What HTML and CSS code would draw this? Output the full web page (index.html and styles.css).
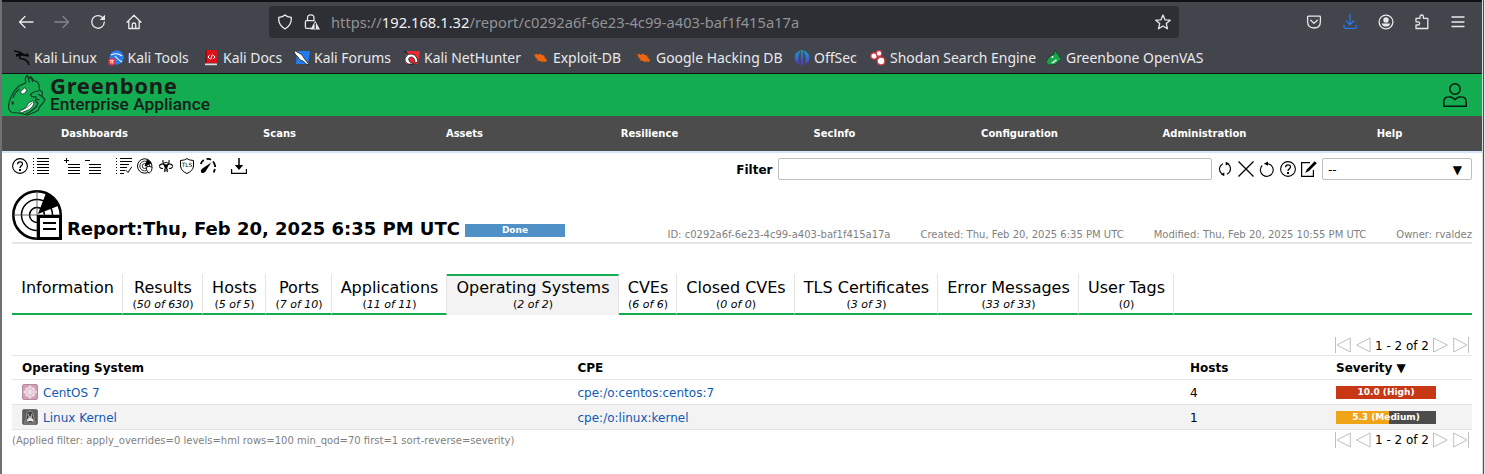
FILE: index.html
```html
<!DOCTYPE html>
<html lang="en">
<head>
<meta charset="utf-8">
<title>Greenbone Enterprise Appliance</title>
<link rel="stylesheet" href="styles.css">
</head>
<body>
<svg class="sprite" aria-hidden="true">
  <symbol id="help" viewBox="0 0 16 16"><circle cx="8" cy="8" r="7.4" fill="none" stroke="currentColor" stroke-width="1.1"/><path d="M5.6 6.3C5.6 3 10.5 3 10.5 6C10.5 7.7 8 7.8 8 10" fill="none" stroke="currentColor" stroke-width="1.3"/><rect x="7.5" y="11.5" width="1" height="1"/></symbol>
  <symbol id="first" viewBox="0 0 16 16"><path d="M.5 0V16M15.3 1V15L2 8Z" fill="none" stroke="currentColor"/></symbol>
  <symbol id="prev" viewBox="0 0 16 16"><path d="M15.1 1V15L1.7 8Z" fill="none" stroke="currentColor"/></symbol>
  <symbol id="next" viewBox="0 0 16 16"><path d="M.5 1V15L14.3 8Z" fill="none" stroke="currentColor"/></symbol>
  <symbol id="last" viewBox="0 0 16 16"><path d="M15.5 0V16M.7 1V15L14 8Z" fill="none" stroke="currentColor"/></symbol>
  <symbol id="bug" viewBox="0 0 16 16"><path d="M1.5 5L3 3.5 5 5 6.5 3.5 9 5 11 5.5 12 8 14 10 13 12 10.5 11.5 8.5 12 6.5 10.8 4 10.5 4.5 9 2.5 7.5Z" fill="#ed6413"/><path d="M0 4.5H3M11 6.3L13.5 6M3 11L5 10.3M10 13L9 11" stroke="#a44b1a" stroke-width=".7"/></symbol>
</svg>
<div class="window">
  <header class="browser">
    <div class="navbar">
      <div class="nav-buttons">
        <svg class="i16" viewBox="0 0 16 16"><path d="M15 8H1.7M7 2.5L1.5 8 7 13.5" /></svg>
        <svg class="i16 faded" viewBox="0 0 16 16"><path d="M1 8H14.3M9 2.5L14.5 8 9 13.5"/></svg>
        <svg class="i16" viewBox="0 0 16 16"><path d="M12.6 3.6A6.3 6.3 0 1 0 14.3 8"/><path d="M15 .7V6H9.7Z" fill="currentColor" stroke="none"/></svg>
        <svg class="i16" viewBox="0 0 16 16"><path d="M1 8.3L8 1.3 15 8.3M2.8 7V14.5H13.2V7M6.3 14V10.5Q6.3 9 8 9T9.7 10.5V14"/></svg>
      </div>
      <div class="urlbar">
        <svg class="i16" viewBox="0 0 16 16"><path d="M8 1Q10 3 14.3 3.3Q15 11 8 15Q1 11 1.7 3.3Q6 3 8 1Z"/></svg>
        <svg class="i16" viewBox="0 0 16 16"><path d="M3.5 6.5V4.2Q3.5.8 6.8.8T10 4.2V6.5M7 14.3H2.4Q1.4 14.3 1.4 13V8Q1.4 6.7 2.6 6.7H10"/><path d="M11.2 6.8L16 15.6H6.4Z" fill="currentColor" stroke="none"/><path d="M11.2 9.5V12.3M11.2 13.2V14.4" stroke="#2e2f34"/></svg>
        <div class="url">https://<b>192.168.1.32</b>/report/c0292a6f-6e23-4c99-a403-baf1f415a17a</div>
        <svg class="i16 star" viewBox="0 0 16 16"><path d="M8 1L10 5.8 15.2 6.2 11.3 9.6 12.5 14.8 8 12 3.5 14.8 4.7 9.6.8 6.2 6 5.8Z"/></svg>
      </div>
      <div class="nav-tools">
        <svg class="i16" viewBox="0 0 16 16"><path d="M2.3 2.2H13.7Q14.4 2.2 14.4 3V7.5Q14.4 14 8 14T1.6 7.5V3Q1.6 2.2 2.3 2.2ZM4.7 6.3L8 9.4 11.3 6.3"/></svg>
        <svg class="i16 blue" viewBox="0 0 16 16"><path d="M8 0V10.5M4.3 7L8 10.7 11.7 7M2 11.5V13Q2 14.3 3.5 14.3H12.8Q14.3 14.3 14.3 13V11.5"/></svg>
        <svg class="i16" viewBox="0 0 16 16"><circle cx="8" cy="8" r="6.9"/><g fill="currentColor" stroke="none"><circle cx="8" cy="6" r="2.7"/><path d="M3.6 9.5H12.4Q11.5 12.6 8 12.6T3.6 9.5Z"/></g></svg>
        <svg class="i16" viewBox="0 0 16 16"><path d="M2 14.5V11H4Q5.6 11 5.6 9.4T4 7.8H2V4.3H6V2.8Q6 1 7.7 1T9.4 2.8V4.3H13.8V14.5Z"/></svg>
        <svg class="i16" viewBox="0 0 16 16"><path d="M2 3H14M2 8H14M2 12.5H14"/></svg>
      </div>
    </div>
    <nav class="bookmarks">
      <a><svg class="i16" viewBox="0 0 16 16"><path d="M0 1Q5 1 9 4L5 3.5M2 5Q8 3 11 5L15 6 12 5.5Q6 4 5.5 7Q5.5 9 9 9Q14 10 15 15M2 6L6 5M12 4.5L14 4" fill="none" stroke="#08080a" stroke-width="1.5"/></svg>Kali Linux</a>
      <a><svg class="i16" viewBox="0 0 16 16"><circle cx="8.7" cy="7.5" r="7.2" fill="#287bea"/><path d="M3 5Q9 2 14 6M7 6Q9 9 14 12" stroke="#fff" fill="none" stroke-width="1.1"/><circle cx="3.8" cy="11.7" r="3.7" fill="#e8313c"/><path d="M1.8 10.3H5.8M3 10.3V13.6M4.8 10.3V13.6" stroke="#fff" stroke-width=".9"/></svg>Kali Tools</a>
      <a><svg class="i16" viewBox="0 0 16 16"><path d="M2 0H14V13H2Z" fill="#df1019"/><path d="M2 0H4V14H2Z" fill="#a50910"/><path d="M2 13.5H14V15.2H2Z" fill="#ddd"/><path d="M6.8 5L5 7 6.8 9M10.2 5L12 7 10.2 9M9.3 4.5L7.7 9.5" stroke="#fff" fill="none"/></svg>Kali Docs</a>
      <a><svg class="i16" viewBox="0 0 16 16"><path d="M3 1H16L14 14H2Z" fill="#207cf0"/><path d="M0 0L3 2 7 4 9 6.5 11 9.5 15 14.5 13 14.5 9 11 6 10 4 7 1 4Z" fill="#fff" stroke="#222" stroke-width=".8"/></svg>Kali Forums</a>
      <a><svg class="i16" viewBox="0 0 16 16"><path d="M3 1H16L14 14H2Z" fill="#eb2932"/><path d="M1 8Q4 3 8 4Q13 5 14 12L11 13Q11 7 7 7Q3 8 6 12L10 14H4Q0 12 1 8Z" fill="#fff" stroke="#171719" stroke-width=".8"/><path d="M0 1L4 4" stroke="#111"/></svg>Kali NetHunter</a>
      <a><svg class="i16"><use href="#bug"/></svg>Exploit-DB</a>
      <a><svg class="i16"><use href="#bug"/></svg>Google Hacking DB</a>
      <a><svg class="i16" viewBox="0 0 16 16"><defs><linearGradient id="off" x2="0" y2="1"><stop stop-color="#12a7c8"/><stop offset="1" stop-color="#5336d6"/></linearGradient></defs><path d="M6 1Q0 3 1 9Q2 13 5 14Q3 7 6 1M10 1Q16 3 15 9Q14 13 11 14Q13 7 10 1M7 0H7.6V15H7ZM8.4 0H9V15H8.4Z" fill="url(#off)" stroke="url(#off)" stroke-width=".4"/></svg>OffSec</a>
      <a><svg class="i16" viewBox="0 0 16 16"><g fill="#fff" stroke="#d2363d" stroke-width="1.2"><circle cx="4" cy="6" r="3.2"/><circle cx="9" cy="3.4" r="2.8"/><circle cx="11" cy="11" r="3.9"/></g></svg>Shodan Search Engine</a>
      <a><svg class="i16" viewBox="0 0 16 16"><path d="M9 0L11 3.5 13 5 13.5 7 15.5 9 12 12 9 14.5 2 15 0 12 3 7 8 4Z" fill="#18a64c" stroke="#173b25" stroke-width=".8"/><path d="M5 13L10 9 11 10.5 7 13.5Z" fill="#ddd"/><circle cx="6.5" cy="7" r="1" fill="#fff"/></svg>Greenbone OpenVAS</a>
    </nav>
  </header>

  <div class="brand">
    <svg class="dragon" viewBox="0 0 38 42"><g fill="none" stroke="#143b25" stroke-width="1.2" stroke-linejoin="round"><path d="M11 12L17.8 8.8 17.2 4.5 19 1.2 21.5 4.5 22.5 2.5 26 6.5 29.5 8 31 11 31.5 16 34 17.5 34.5 20 33.5 22 37 25.5 35 29 31 33.5 30.5 36 27 38 19.5 41 11 39 4 38.5Q-1 35.5 1 29Q4 18 11 12Z"/><path d="M31 17Q26 17 22.5 20.5L24 23 28 22.5 27.5 26.5 30 29.5Q28 35 18 40M20 3.5L21.5 8.5M23 4L25 8M30 20L33 22M28.5 25L31.5 26M11.5 15Q7 18 5 24"/></g><path d="M12.6 17.5L17 13.5 18.7 16.5 16.5 19.5 13.5 20.2Z M11.5 36.5Q18 35 20.5 29L25.5 26.5 25.8 30Q23.5 35.5 18 36.8L13 39Z" fill="#fff" stroke="#143b25" stroke-width=".8"/><path d="M13 36.5Q20 34 24.5 28.5" fill="none" stroke="#143b25" stroke-width=".7"/><ellipse cx="4.7" cy="29" rx="1.2" ry="1.7" fill="#143b25"/></svg>
    <div class="brand-text"><strong>Greenbone</strong><span>Enterprise Appliance</span></div>
    <svg class="user" viewBox="0 0 24 24"><g fill="none" stroke="#07180e" stroke-width="1.5"><circle cx="12" cy="6" r="5.2"/><path d="M.8 23.2V19Q.8 13.7 6 13.7Q9 13.5 12 16.5Q15 13.5 18 13.7Q23.2 13.7 23.2 19V23.2Z"/></g></svg>
  </div>
  <nav class="menu"><a>Dashboards</a><a>Scans</a><a>Assets</a><a>Resilience</a><a>SecInfo</a><a>Configuration</a><a>Administration</a><a>Help</a></nav>

  <main>
    <div class="toolbar">
      <div class="tools">
        <svg class="i16"><use href="#help"/></svg>
        <svg class="i16 list" viewBox="0 0 16 16"><path d="M4 .5H16M4 3.5H16M4 6.5H16M4 9.5H16M4 12.5H16M4 15.5H16"/><path d="M.5 0V16" stroke-dasharray="1 2"/></svg>
        <svg class="i16 gap" viewBox="0 0 16 16"><path d="M0 2.5H5M2.5 0V5M4 6.5H16M4 9.5H16M4 12.5H16M4 15.5H16"/></svg>
        <svg class="i16" viewBox="0 0 16 16"><path d="M0 2.5H5M4 6.5H16M4 9.5H16M4 12.5H16M4 15.5H16"/></svg>
        <svg class="i16 gap" viewBox="0 0 16 16"><path d="M4 .5H16M4 3.5H16M4 6.5H13M4 9.5H11M4 12.5H9M4 15.5H8M9.5 12L12 14.5 16 8.5"/><path d="M.5 0V16" stroke-dasharray="1 2"/></svg>
        <svg class="i16" viewBox="0 0 16 16"><circle cx="7.7" cy="8" r="7.2"/><circle cx="7.7" cy="8" r="4.9" stroke-width=".8"/><circle cx="7.7" cy="8" r="2.5" stroke-width=".8"/><path d="M8 8L10.5 1.7 14 5Z" fill="currentColor"/><path d="M9.2 9.3L12 8.3 15.2 9.3Q15.2 13.5 12.2 15.3Q9.2 13 9.2 9.3Z" fill="#fff" stroke-width=".9"/></svg>
        <svg class="i16" viewBox="0 0 16 16"><g stroke-width="1.1"><path d="M5 2.2Q4.2 6.5 8 7.3Q11.8 6.5 11 2.2M1.2 7.8Q3.5 4.8 6.3 7Q8.5 9 6.2 12.6M14.8 7.8Q12.5 4.8 9.7 7Q7.5 9 9.8 12.6M1.3 8.5Q2.5 11 5 10.3M14.7 8.5Q13.5 11 11 10.3"/><path d="M5.3 5.3Q8 3.6 10.7 5.3" stroke-width=".9"/></g><circle cx="8" cy="8.2" r="1.6" fill="currentColor" stroke="none"/><path d="M8 8V12.5M6 14L8 12.5 10 14" stroke-width=".9"/></svg>
        <svg class="i16" viewBox="0 0 16 16"><path d="M8 .6Q10 2.3 14.5 2.5V8Q14 13 8 15.5Q2 13 1.5 8V2.5Q6 2.3 8 .6Z"/><text x="2.8" y="9.4" class="tls">TLS</text></svg>
        <svg class="i16" viewBox="0 0 16 16"><path d="M.8 6Q1.5 3.5 3.8 2M6.5 1.2Q9 .5 11 1.8M13 3.5Q15.2 6 15.2 9M14.9 11L13.8 14.5" stroke-width="1.8"/><path d="M11.3 4.5L5.5 13.4Q3.5 16 1.2 14.5Q0 12.5 2 10.7Z" fill="currentColor" stroke="none"/></svg>
        <svg class="i16 gap" viewBox="0 0 16 16"><path d="M8 0V10" stroke-width="1.5"/><path d="M3.8 7H12.2L8 12Z" fill="currentColor" stroke="none"/><path d="M.6 11V15.4H15.4V11" stroke-width="1.2"/></svg>
      </div>
      <div class="filter">
        <label>Filter</label><div class="field"></div>
        <div class="filter-tools">
          <svg class="i16" viewBox="0 0 16 16"><path d="M6 2.8Q2.5 4.8 2.5 8.3Q2.5 11 4.8 12.7M10 13.2Q13.5 11.2 13.5 8Q13.5 4.5 11 3" stroke-width="1.1"/><path d="M8.7.8V4.6L12.3 2.6ZM7.3 11.4V15.2L3.7 13.2Z" fill="currentColor" stroke="none"/></svg>
          <svg class="i16" viewBox="0 0 16 16"><path d="M.5.5L15.5 15.5M15.5.5L.5 15.5" stroke-width="1.3"/></svg>
          <svg class="i16" viewBox="0 0 16 16"><path d="M7 2.7H9A6.4 6.4 0 1 1 3.2 4.5" stroke-width="1.1"/><path d="M4.8 2.7L9 .5V4.8Z" fill="currentColor" stroke="none"/></svg>
          <svg class="i16"><use href="#help"/></svg>
          <svg class="i16" viewBox="0 0 16 16"><path d="M9 1.6H.6V15.4H12.4V9" stroke-width="1.2"/><path d="M15.8 2.2L8 10 4 12 6 8.2 13.7.2Z" fill="currentColor" stroke="none"/></svg>
        </div>
        <div class="select"><span>--</span><span class="arrow">▼</span></div>
      </div>
    </div>

    <section class="heading">
      <svg class="report-icon" viewBox="0 0 50 50"><g fill="none" stroke="#000"><circle cx="25" cy="25" r="23.7" stroke-width="2.6"/><circle cx="25" cy="25" r="15.5" stroke-width="1.5"/><circle cx="25" cy="25" r="7.5" stroke-width="1.5"/><path d="M25 0V50M0 25H50" stroke="#444" stroke-width=".8"/></g><path d="M26 24L34 3Q43 7 46 16Z"/><path d="M26.5 26.5H48.5V48.5H26.5Z" fill="#fff" stroke="#000" stroke-width="3"/><path d="M31 33H44M31 39H44" stroke="#000" stroke-width="2.2"/></svg>
      <h1>Report:Thu, Feb 20, 2025 6:35 PM UTC</h1>
      <div class="bar done">Done</div>
      <div class="meta"><span>ID: c0292a6f-6e23-4c99-a403-baf1f415a17a</span><span>Created: Thu, Feb 20, 2025 6:35 PM UTC</span><span>Modified: Thu, Feb 20, 2025 10:55 PM UTC</span><span>Owner: rvaldez</span></div>
    </section>

    <div class="tabs">
      <div class="tab">Information</div>
      <div class="tab">Results<small>(<i>50 of 630</i>)</small></div>
      <div class="tab">Hosts<small>(<i>5 of 5</i>)</small></div>
      <div class="tab">Ports<small>(<i>7 of 10</i>)</small></div>
      <div class="tab">Applications<small>(<i>11 of 11</i>)</small></div>
      <div class="tab active">Operating Systems<small>(<i>2 of 2</i>)</small></div>
      <div class="tab">CVEs<small>(<i>6 of 6</i>)</small></div>
      <div class="tab">Closed CVEs<small>(<i>0 of 0</i>)</small></div>
      <div class="tab">TLS Certificates<small>(<i>3 of 3</i>)</small></div>
      <div class="tab">Error Messages<small>(<i>33 of 33</i>)</small></div>
      <div class="tab">User Tags<small>(<i>0</i>)</small></div>
      <div class="tab-rest"></div>
    </div>

    <div class="pager top"><svg class="i16"><use href="#first"/></svg><svg class="i16"><use href="#prev"/></svg><span>1 - 2 of 2</span><svg class="i16"><use href="#next"/></svg><svg class="i16"><use href="#last"/></svg></div>
    <div class="table">
      <div class="row head"><span>Operating System</span><span>CPE</span><span>Hosts</span><span>Severity ▼</span></div>
      <div class="row">
        <a><svg class="i16 os" viewBox="0 0 16 16"><rect x=".5" y=".5" width="15" height="15" rx="1.5" fill="#d2a1b5" stroke="#b38b9b"/><path d="M8 1.5L10 4H12V6L14.5 8 12 10V12H10L8 14.5 6 12H4V10L1.5 8 4 6V4H6ZM4 4L12 12M12 4L4 12M8 2V14M2 8H14" fill="#e2bfcc" stroke="#faedf2" stroke-width=".8"/></svg><span>CentOS 7</span></a>
        <a><span>cpe:/o:centos:centos:7</span></a><span>4</span><div class="bar high">10.0 (High)</div>
      </div>
      <div class="row even">
        <a><svg class="i16 os" viewBox="0 0 16 16"><rect x=".5" y=".5" width="15" height="15" rx="1.5" fill="#5c5c5c" stroke="#747474"/><path d="M2.5 14Q4.5 10 4.5 6Q4.5 2 8 2T11.5 6Q11.5 10 13.5 14Z" fill="#444" stroke="#aaa" stroke-width=".7"/><path d="M4.5 13Q5 8.5 8 9Q11.5 8.5 11.8 13L9 12H7Z" fill="#e5e5e5"/><path d="M5.7 6H7M9 6H10.3M6.5 8H10" stroke="#fff" stroke-width="1.2"/></svg><span>Linux Kernel</span></a>
        <a><span>cpe:/o:linux:kernel</span></a><span>1</span><div class="bar medium">5.3 (Medium)</div>
      </div>
    </div>
    <div class="footer"><span class="applied">(Applied filter: apply_overrides=0 levels=hml rows=100 min_qod=70 first=1 sort-reverse=severity)</span>
      <div class="pager"><svg class="i16"><use href="#first"/></svg><svg class="i16"><use href="#prev"/></svg><span>1 - 2 of 2</span><svg class="i16"><use href="#next"/></svg><svg class="i16"><use href="#last"/></svg></div>
    </div>
  </main>
</div>
</body>
</html>
```
FILE: styles.css
```css
* { box-sizing: border-box; }
body { margin: 0; background: #fff; color: #000; font: 12px/15px "DejaVu Sans", sans-serif; white-space: nowrap; }
.sprite { display: none; }
.window { height: 474px; overflow: hidden; border-left: 2px solid #717171; border-right: 1px solid #e4e4e6; box-shadow: inset -1px 0 #4c4d51, inset -2px 0 #dadadc; padding-right: 2px; width: 1485px; }
.i16 { width: 16px; height: 16px; flex: none; display: block; }

.browser { height: 74px; padding-top: 4px; background: #43454d; border-top: 2px solid #101115; border-bottom: 1px solid #101214; font-family: "Noto Sans", sans-serif; color: #e9e9eb; }
.navbar { display: flex; height: 32px; align-items: center; }
.navbar .i16 { fill: none; stroke: currentColor; stroke-width: 1.3; stroke-linecap: round; stroke-linejoin: round; }
.nav-buttons { display: flex; gap: 20px; width: 267px; padding-left: 16px; }
.navbar .faded { color: #85868b; }
.navbar .blue { color: #2876e8; }
.urlbar { display: flex; align-items: center; width: 910px; height: 32px; padding: 0 8px; background: #2e2f34; border-radius: 4px; }
.urlbar .i16 + .i16 { margin-left: 11px; }
.url { flex: 1; margin-left: 11px; color: #929397; font-size: 14.67px; letter-spacing: .035px; line-height: 20px; }
.url b { font-weight: 400; color: #f1f1f2; }
.nav-tools { display: flex; gap: 20px; margin-left: 127px; }
.bookmarks { display: grid; grid-template-columns: 93.5px 95.5px 91px 110px 129px 103px 158px 76px 176px auto; height: 40px; padding-left: 12px; align-items: center; font-size: 13.95px; line-height: 20px; }
.bookmarks a { display: flex; gap: 4px; align-items: center; }

.brand { display: flex; height: 42px; background: #13ac51; padding: 0 15px 0 6px; }
.dragon { width: 38px; height: 42px; }
.brand-text { flex: 1; padding-left: 4px; color: #171d1a; }
.brand-text strong { display: block; font: 700 22px/22px "Noto Sans", sans-serif; letter-spacing: .75px; }
.brand-text span { display: block; font: 500 17.3px/17px Roboto, sans-serif; }
.user { width: 24px; height: 24px; margin-top: 9px; }
.menu { display: grid; grid-template-columns: repeat(8, 1fr); height: 35px; background: #4c4c4c; color: #fff; text-align: center; font-size: 10px; font-weight: 700; line-height: 35px; }

main { border-top: 2px solid #d5e4fb; padding: 0 10px; }
.toolbar { display: flex; justify-content: space-between; height: 36px; padding-top: 5px; }
.tools { display: flex; gap: 5px; }
.tools .i16, .filter-tools .i16 { fill: none; stroke: #000; stroke-width: 1; }
.tools .gap { margin-left: 10px; }
.tls { font: 5.8px "DejaVu Sans", sans-serif; fill: #000; stroke: none; }
.filter { display: flex; height: 22px; align-items: center; }
.filter label { font-weight: 700; margin-right: 5.5px; padding-top: 2px; }
.field { width: 434px; height: 22px; border: 1px solid #bfbfbf; border-radius: 2px; }
.filter-tools { display: flex; gap: 5px; margin: 0 5px; }
.select { display: flex; justify-content: space-between; width: 150px; height: 22px; border: 1px solid #bfbfbf; border-radius: 2px; padding: 4px 9px 0 5px; }

.heading { display: flex; align-items: flex-end; height: 55px; padding-bottom: 2px; border-bottom: 2px solid #e5e5e5; }
.report-icon { width: 50px; height: 50px; margin-right: 5px; }
h1 { margin: 0 5px 0 0; font-size: 18px; line-height: 22px; }
.bar { width: 100px; height: 13px; color: #fff; font-weight: 700; font-size: 9px; line-height: 13px; text-align: center; }
.done { background: #4f91c7; margin-bottom: 3px; }
.meta { display: flex; gap: 30px; margin-left: auto; color: #7f7f7f; font-size: 10px; line-height: 10px; }

.tabs { display: grid; grid-template-columns: 111px 80px 63px 66px 115px 172px 58px 118px 143px 141px 95px 1fr; height: 41px; margin-top: 30px; }
.tab { border-right: 1px solid #e5e5e5; border-bottom: 2px solid #13ac51; text-align: center; font-size: 16px; line-height: 18px; padding: 5px 0 0 1px; }
.tab small { display: block; font-size: 11px; line-height: 15px; }
.tab.active { background: #f3f3f3; border-top: 2px solid #13ac51; border-bottom: 0; padding-top: 3px; }
.tab-rest { border-bottom: 2px solid #13ac51; }

.pager { display: flex; justify-content: flex-end; gap: 4px; align-items: center; padding-right: 3px; color: #bfbfbf; height: 16px; }
.pager span { color: #000; }
.pager.top { margin: 22px 0 2px; }
.pager.top span { padding-top: 2px; }
.table { border-top: 1px solid #e5e5e5; }
.row { display: grid; grid-template-columns: 555.5px 612.5px 146px 1fr; height: 25px; align-items: center; padding-left: 10px; border-bottom: 1px solid #e5e5e5; }
.row.head { height: 24px; font-weight: 700; }
.row span { padding-top: 2px; }
.row a { display: flex; align-items: center; gap: 5px; color: #1259b5; }
.row.even { background: #f3f3f3; }
.high { background: #c83814; }
.medium { background: linear-gradient(90deg, #f0a519 53%, #4c4c4c 53%); }
.footer { display: flex; justify-content: space-between; padding-top: 2px; }
.applied { font-size: 10px; line-height: 17px; color: #7f7f7f; }
```
